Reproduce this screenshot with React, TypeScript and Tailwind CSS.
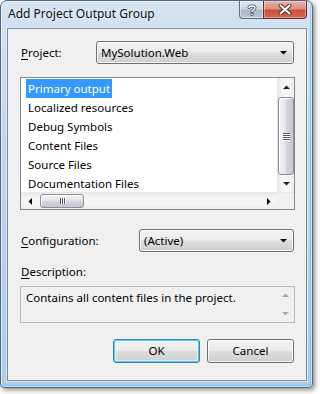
import React from "react";

const face =
  "bg-[linear-gradient(to_bottom,#f2f2f2_0%,#ebebeb_48%,#dddddd_52%,#cfcfcf_100%)]";

function Tri({ dir, color = "#000" }: { dir: "up" | "down" | "left" | "right"; color?: string }) {
  const pts: Record<string, string> = {
    up: "0,4 7,4 3.5,0.5",
    down: "0,0 7,0 3.5,3.5",
    left: "4,0 4,7 0.5,3.5",
    right: "0,0 0,7 3.5,3.5",
  };
  const vertical = dir === "up" || dir === "down";
  return (
    <svg width={vertical ? 7 : 4} height={vertical ? 4 : 7} viewBox={vertical ? "0 0 7 4" : "0 0 4 7"}>
      <polygon points={pts[dir]} fill={color} />
    </svg>
  );
}

function VScroll({ thumb, disabled }: { thumb: boolean; disabled?: boolean }) {
  const c = disabled ? "#a3a3a3" : "#222";
  return (
    <div className="w-[17px] flex flex-col bg-[linear-gradient(to_right,#e9e9e9,#f5f5f5_30%,#f5f5f5_70%,#ececec)] border-l border-[#e8e8e8]">
      <div className="h-[17px] shrink-0 flex items-center justify-center">
        <Tri dir="up" color={c} />
      </div>
      <div className="flex-1 pt-[2px] flex">
        {thumb && (
          <div className="flex-1 rounded-[3px] border border-[#8f8f8f] bg-[linear-gradient(to_right,#f4f4f6,#e4e4ec_45%,#d4d4de_55%,#c6c6d2)] shadow-[inset_1px_1px_0_#ffffff] flex flex-col items-center justify-center gap-[1px]">
            {[0, 1, 2, 3].map((i) => (
              <div key={i} className="w-[7px] h-[1px] bg-[#555] shadow-[0_1px_0_#fff]" />
            ))}
          </div>
        )}
      </div>
      <div className="h-[17px] shrink-0 flex items-center justify-center">
        <Tri dir="down" color={c} />
      </div>
    </div>
  );
}

function Combo({ text, className }: { text: string; className?: string }) {
  return (
    <div
      className={`h-[23px] rounded-[3px] border border-[#707070] ${face} shadow-[inset_0_0_0_1px_rgba(255,255,255,0.75)] flex items-center pl-[4px] pr-[6px] ${className ?? ""}`}
    >
      <span className="flex-1">{text}</span>
      <Tri dir="down" />
    </div>
  );
}

export default function App() {
  const items = [
    "Primary output",
    "Localized resources",
    "Debug Symbols",
    "Content Files",
    "Source Files",
    "Documentation Files",
  ];

  return (
    <div className="w-[320px] h-[394px] bg-white font-['Noto_Sans',sans-serif] text-[11.5px] text-black leading-[16px]">
      <div className="w-[313px] h-[388px] rounded-t-[7px] rounded-b-[4px] border border-[#54667a] bg-[linear-gradient(to_bottom,#d4e3f2,#c1d6ec_35%,#b3cbe6)] shadow-[2px_2px_5px_rgba(0,0,0,0.45),inset_0_0_0_1px_rgba(255,255,255,0.55),inset_-2px_-2px_0_rgba(70,200,240,0.55)] flex flex-col">
        {/* title bar */}
        <div className="h-[27px] shrink-0 flex items-start">
          <div className="pl-[7px] pt-[5px] flex-1 text-[12px] text-[#111] [text-shadow:0_0_6px_rgba(255,255,255,0.9)]">
            Add Project Output Group
          </div>
          <div className="flex mr-[5px] h-[18px]">
            <div className="w-[24px] h-full rounded-bl-[4px] border border-[#5d6f83] border-t-0 border-r-0 bg-[linear-gradient(to_bottom,#dfe7ef,#c9d5e1_45%,#aab9c9_55%,#b8c8d8)] shadow-[inset_0_0_0_1px_rgba(255,255,255,0.45)] flex items-center justify-center">
              <svg width="10" height="12" viewBox="0 0 10 12">
                <path d="M2 3.5 C2 1.5 8 1.2 8 3.8 C8 5.8 5 5.8 5 7.6" fill="none" stroke="#4b5560" strokeWidth="3" strokeLinecap="round" />
                <path d="M2 3.5 C2 1.5 8 1.2 8 3.8 C8 5.8 5 5.8 5 7.6" fill="none" stroke="#fff" strokeWidth="1.4" strokeLinecap="round" />
                <rect x="3.6" y="9" width="2.8" height="2.8" fill="#4b5560" />
                <rect x="4.3" y="9.7" width="1.4" height="1.4" fill="#fff" />
              </svg>
            </div>
            <div className="w-[44px] h-full rounded-br-[4px] border border-[#6b2a22] border-t-0 bg-[linear-gradient(to_bottom,#ebb3a8,#dc8f80_45%,#c8503c_55%,#d56a52)] shadow-[inset_0_0_0_1px_rgba(255,255,255,0.35)] flex items-center justify-center">
              <svg width="14" height="11" viewBox="0 0 14 11">
                <path d="M2.5 1.5 L11.5 9.5 M11.5 1.5 L2.5 9.5" stroke="#4a2a26" strokeWidth="4" strokeLinecap="round" />
                <path d="M2.5 1.5 L11.5 9.5 M11.5 1.5 L2.5 9.5" stroke="#fff" strokeWidth="2.2" strokeLinecap="round" />
              </svg>
            </div>
          </div>
        </div>

        {/* client area */}
        <div className="ml-[6px] w-[300px] h-[353px] border border-[#7b8b9e] bg-[#f0f0f0] shadow-[0_0_0_1px_rgba(255,255,255,0.45)] pl-[12px] pr-[11px] pt-[12px] flex flex-col">
          <div className="flex items-center h-[23px]">
            <div className="w-[76px] pl-[1px]">
              <span className="underline underline-offset-2">P</span>roject:
            </div>
            <Combo text="MySolution.Web" className="flex-1 mr-[1px]" />
          </div>

          {/* list */}
          <div className="mt-[13px] h-[133px] border border-[#828790] bg-white flex flex-col">
            <div className="h-[114px] flex">
              <div className="flex-1 pt-[1px] pl-[5px] overflow-hidden">
                {items.map((it, i) => (
                  <div key={it} className="h-[19px] flex items-center">
                    <span
                      className={`h-[19px] px-[2px] flex items-center ${
                        i === 0 ? "bg-[#3399ff] text-white" : ""
                      }`}
                    >
                      {it}
                    </span>
                  </div>
                ))}
              </div>
              <VScroll thumb />
            </div>
            <div className="h-[17px] flex bg-[linear-gradient(to_bottom,#e9e9e9,#f5f5f5_30%,#f5f5f5_70%,#ececec)] border-t border-[#e8e8e8]">
              <div className="w-[17px] flex items-center justify-center">
                <Tri dir="left" />
              </div>
              <div className="flex-1 pl-[2px] py-[1px] flex">
                <div className="w-[44px] rounded-[3px] border border-[#8f8f8f] bg-[linear-gradient(to_bottom,#f4f4f6,#e4e4ec_45%,#d4d4de_55%,#c6c6d2)] shadow-[inset_1px_1px_0_#ffffff] flex items-center justify-center gap-[1px]">
                  {[0, 1, 2].map((i) => (
                    <div key={i} className="w-[1px] h-[6px] bg-[#555] shadow-[1px_0_0_#fff]" />
                  ))}
                </div>
              </div>
              <div className="w-[17px] flex items-center justify-center">
                <Tri dir="right" />
              </div>
              <div className="w-[17px] bg-[#f0f0f0]" />
            </div>
          </div>

          <div className="mt-[19px] flex items-center h-[23px]">
            <div className="w-[119px] pl-[1px]">
              <span className="underline underline-offset-2">C</span>onfiguration:
            </div>
            <Combo text="(Active)" className="flex-1 mr-[1px]" />
          </div>

          <div className="mt-[12px] h-[16px] pl-[1px]">
            <span className="underline underline-offset-2">D</span>escription:
          </div>

          <div className="mt-[6px] h-[37px] border border-[#b5b9c0] bg-[#f0f0f0] flex">
            <div className="flex-1 pl-[5px] pt-[3px]">Contains all content files in the project.</div>
            <div className="w-[17px] flex flex-col items-center justify-between py-[6px]">
              <Tri dir="up" color="#a8a8a8" />
              <Tri dir="down" color="#a8a8a8" />
            </div>
          </div>

          <div className="mt-[16px] flex justify-end gap-[7px] pr-[1px]">
            <button
              className={`w-[87px] h-[24px] rounded-[3px] border border-[#3c7fb1] ${face} shadow-[inset_0_0_0_1px_#48d1f7,inset_0_0_0_2px_rgba(255,255,255,0.5)]`}
            >
              OK
            </button>
            <button
              className={`w-[87px] h-[24px] rounded-[3px] border border-[#707070] ${face} shadow-[inset_0_0_0_1px_rgba(255,255,255,0.75)]`}
            >
              Cancel
            </button>
          </div>
        </div>
      </div>
    </div>
  );
}
